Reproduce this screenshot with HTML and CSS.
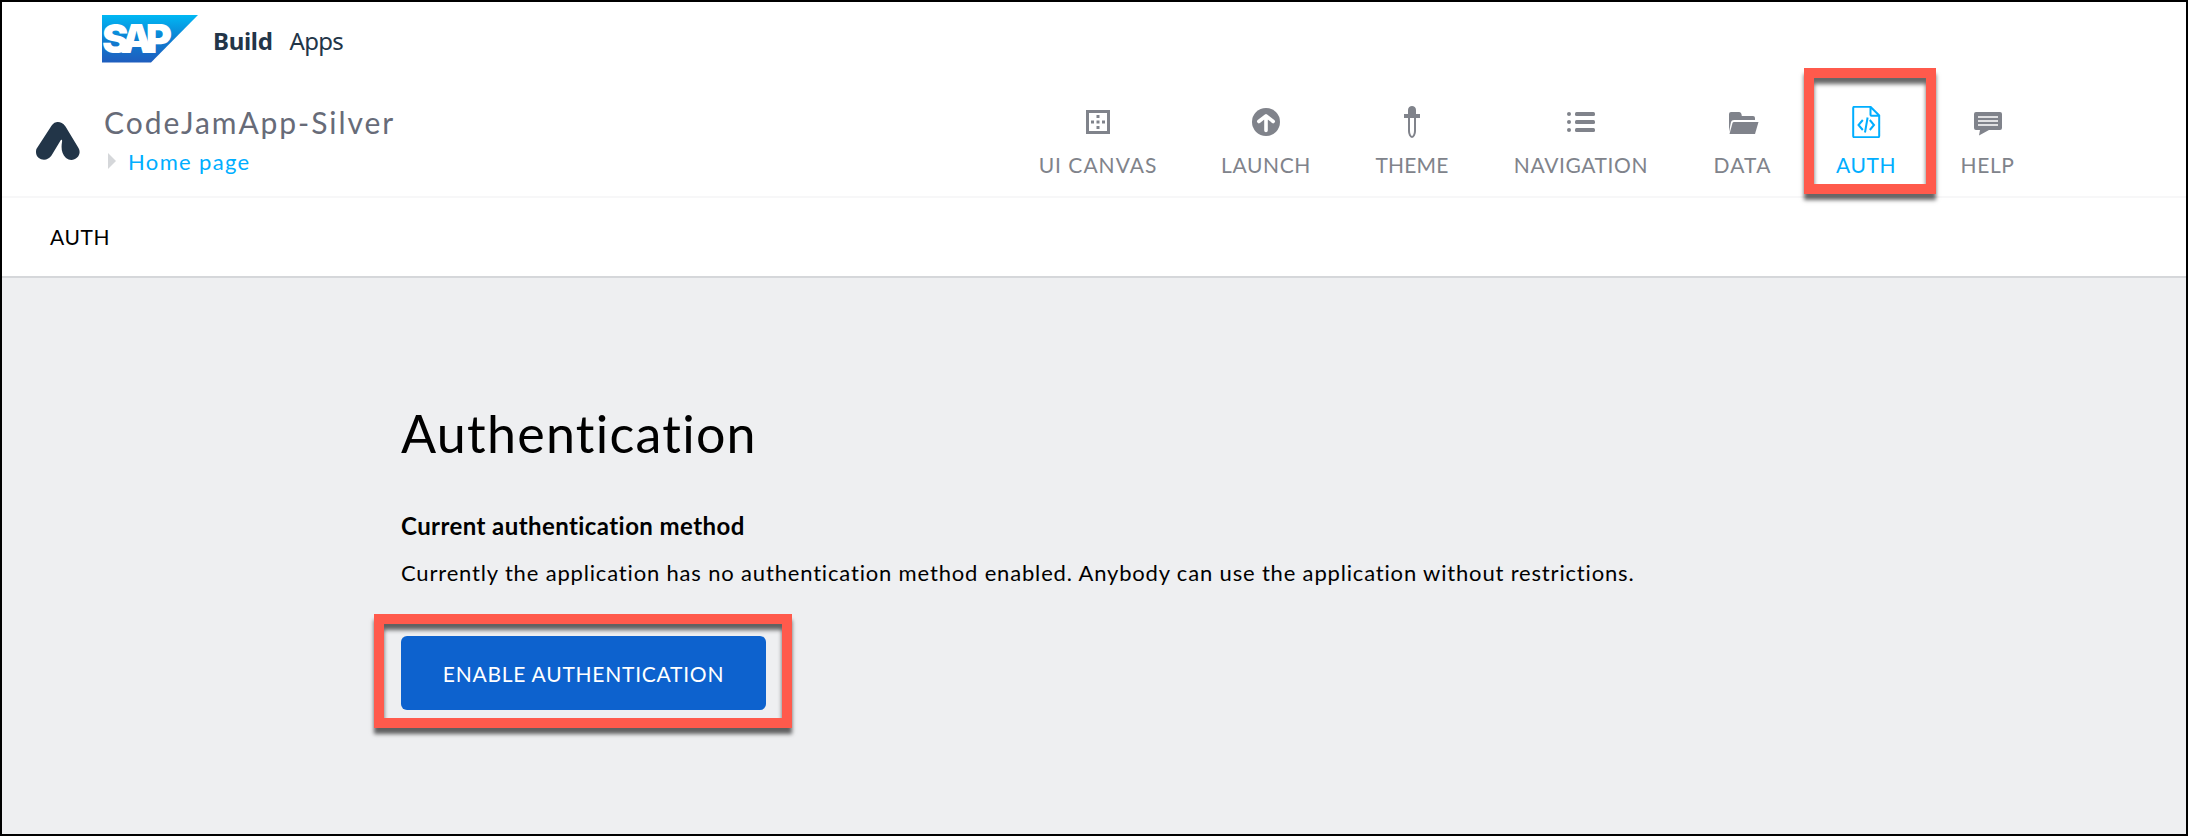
FILE: index.html
```html
<!DOCTYPE html>
<html lang="en">
<head>
<meta charset="utf-8">
<title>Authentication</title>
<link rel="stylesheet" href="styles.css">
</head>
<body>
<div class="app">
  <header class="top">
    <div class="shell">
      <svg class="sap" viewBox="0 0 96 48" width="96" height="48">
        <defs><linearGradient id="g" x1="0" y1="0" x2="0" y2="1"><stop offset="0" stop-color="#00b8f4"/><stop offset=".5" stop-color="#0d80d2"/><stop offset="1" stop-color="#1f5dbe"/></linearGradient></defs>
        <path d="M0 0H96L49 47.5H0Z" fill="url(#g)"/>
        <text class="sap-text" x="0" y="38" textLength="70" lengthAdjust="spacing">SAP</text>
      </svg>
      <span class="build">Build</span><span class="apps">Apps</span>
    </div>
    <div class="bar">
      <svg class="logo" viewBox="0 0 44 38" width="44" height="38"><path d="M15 4.5C17.500 .8 19.500 0 22 0S27 1 29.500 4.500L42.500 26C47 34 37 41.500 30 36C25.500 32 25 26 26 20C26.300 18 26 17.500 25 17.800L15.500 33.500C11 41-2.500 38 .4 27Z" fill="#223548"/></svg>
      <div class="project">
        <div class="name">CodeJamApp-Silver</div>
        <div class="crumb"><svg viewBox="0 0 8 16" width="8" height="16"><path d="M0 0L8 8L0 16Z" fill="#d5d7da"/></svg><span class="page">Home page</span></div>
      </div>
      <nav class="nav">
        <a class="item w-canvas"><svg viewBox="0 0 32 32"><path fill="none" stroke="currentColor" stroke-width="3" d="M5.500 5.500H26.500V26.500H5.500Z"/><path fill="currentColor" d="M14.500 9h3v3h-3zM14.500 14.500h3v3h-3zM14.500 20h3v3h-3zM9 14.500h3v3H9zM20 14.500h3v3h-3z"/></svg><span>UI CANVAS</span></a>
        <a class="item w-launch"><svg viewBox="0 0 32 32"><circle cx="16" cy="16" r="14" fill="currentColor"/><path d="M16 10.500V24.500M8.800 15.500L16 9.800L23.200 15.500" fill="none" stroke="#fff" stroke-width="3.600" stroke-linecap="round" stroke-linejoin="round"/></svg><span>LAUNCH</span></a>
        <a class="item w-theme"><svg viewBox="0 0 32 32"><path fill="currentColor" d="M8 8h4V4c0-5.300 8-5.300 8 0v4h4v4H8z"/><path fill="none" stroke="currentColor" stroke-width="2" d="M13 11V25C13 28 14.500 31 16 31S19 28 19 25V11"/></svg><span>THEME</span></a>
        <a class="item w-navigation"><svg viewBox="0 0 32 32" fill="currentColor"><circle cx="4" cy="8" r="2"/><circle cx="4" cy="16" r="2"/><circle cx="4" cy="24" r="2"/><rect x="10" y="6" width="20" height="4" rx="1.500"/><rect x="10" y="14" width="20" height="4" rx="1.500"/><rect x="10" y="22" width="20" height="4" rx="1.500"/></svg><span>NAVIGATION</span></a>
        <a class="item w-data"><svg viewBox="0 0 32 32" fill="currentColor"><path d="M2 8Q2 6 4 6H12Q14.500 6 14.800 10H26Q28 10 28 12V14H7Q4.500 14 4 16L2 26Z"/><path d="M7 16H31.500L28 28H2.500L5.500 17Q5.800 16 7 16Z"/></svg><span>DATA</span></a>
        <a class="item w-auth active"><svg viewBox="0 0 32 32" fill="none" stroke="currentColor" stroke-width="2"><path d="M20 .8H4.500Q3.200 .8 3.200 2V30Q3.200 31.200 4.500 31.200H28Q29.200 31.200 29.200 30V9.500L20.500 .8V8.800Q20.500 9.800 21.500 9.800H29M12.800 14L8.500 19L12.800 24M19.800 14L24 19L19.800 24M17.600 11.500L15 26.500"/></svg><span>AUTH</span></a>
        <a class="item w-help"><svg viewBox="0 0 32 32"><path fill="currentColor" d="M4 6H28Q30 6 30 8V22Q30 24 28 24H17L7 29.500L8 24H4Q2 24 2 22V8Q2 6 4 6Z"/><path d="M6 11H26M6 15H26M6 19H26" stroke="#fff" stroke-width="1.600"/></svg><span>HELP</span></a>
      </nav>
    </div>
  </header>
  <div class="section">AUTH</div>
  <main class="content">
    <h1>Authentication</h1>
    <h2>Current authentication method</h2>
    <p>Currently the application has no authentication method enabled. Anybody can use the application without restrictions.</p>
    <button class="enable">ENABLE AUTHENTICATION</button>
  </main>
  <div class="mark mark-auth"></div>
  <div class="mark mark-enable"></div>
</div>
</body>
</html>
```
FILE: styles.css
```css
* { box-sizing: border-box; }
body { margin: 0; font-family: Lato, "Open Sans", sans-serif; }
.app { position: relative; width: 2188px; height: 836px; border: 2px solid #000; background: #eeeff1; overflow: hidden; }
.top { height: 196px; background: #fff; border-bottom: 2px solid #f7f7f8; }
.shell { display: flex; height: 62px; padding: 13px 0 0 100px; font-family: "Noto Sans", sans-serif; font-size: 24px; line-height: 32px; color: #223548; }
.sap-text { font-family: Inter, sans-serif; font-weight: 900; font-size: 40px; fill: #fff; }
.build { margin: 10px 0 0 15px; font-weight: 700; letter-spacing: -0.3px; }
.apps { margin: 10px 0 0 17px; letter-spacing: -0.7px; }
.bar { display: flex; height: 132px; padding-left: 34px; }
.logo { margin-top: 58px; }
.project { width: 900px; margin-left: 24px; padding-top: 38px; }
.name { height: 43px; font-size: 30px; line-height: 40px; letter-spacing: 1.95px; color: #676b78; }
.crumb { display: flex; align-items: center; gap: 12px; height: 32px; padding-left: 4px; font-size: 22px; letter-spacing: 1.35px; color: #00aeff; }
.nav { display: flex; margin-left: 3px; padding-top: 42px; color: #80838b; }
.item { display: flex; flex-direction: column; align-items: center; font-size: 21px; line-height: 28px; letter-spacing: .6px; white-space: nowrap; }
.item svg { width: 32px; height: 32px; margin-bottom: 13px; }
.w-canvas { width: 182px; letter-spacing: 1px; }
.w-launch { width: 154px; }
.w-theme { width: 138px; letter-spacing: .2px; }
.w-navigation { width: 200px; }
.w-data { width: 123px; letter-spacing: 1.2px; }
.w-auth { width: 124px; }
.w-help { width: 119px; }
.active { color: #00aeff; }
.section { height: 80px; padding: 22px 0 0 48px; background: #fff; border-bottom: 2px solid #d5d7da; font-size: 21px; line-height: 34px; letter-spacing: .6px; }
.content { padding: 118px 0 0 399px; color: #000; }
h1 { margin: 0; font-size: 52px; line-height: 75px; font-weight: 400; letter-spacing: 1.25px; }
h2 { margin: 37px 0 0; font-size: 24px; line-height: 36px; font-weight: 700; letter-spacing: .42px; }
p { margin: 12px 0 0; font-size: 22px; line-height: 34px; letter-spacing: .83px; }
.enable { display: block; width: 365px; height: 74px; margin-top: 46px; padding: 0; border: 0; border-radius: 6px; background: #0d62ce; color: #fff; font: 21px Lato, sans-serif; letter-spacing: .75px; }
.mark { position: absolute; border: 10px solid #ff5a4c; box-shadow: 0 6px 4px rgba(0,0,0,.6), inset 0 6px 4px rgba(0,0,0,.6); }
.mark-auth { left: 1802px; top: 66px; width: 132px; height: 126px; }
.mark-enable { left: 372px; top: 612px; width: 418px; height: 114px; }
```
